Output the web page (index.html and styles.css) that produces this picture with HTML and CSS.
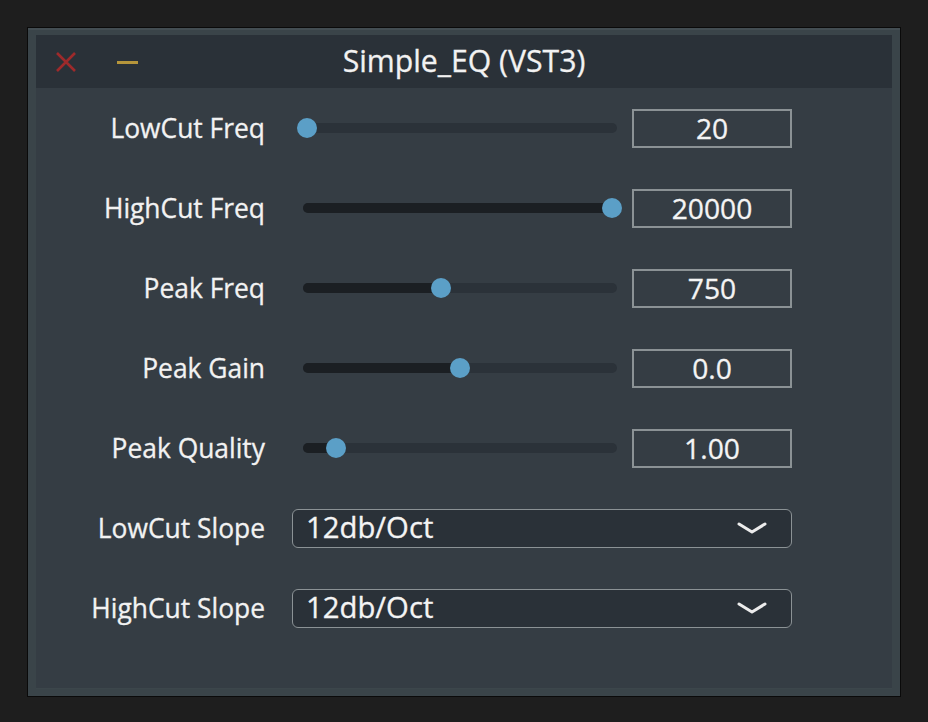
FILE: index.html
```html
<!DOCTYPE html>
<html lang="en">
<head>
<meta charset="utf-8">
<title>Simple_EQ (VST3)</title>
<link rel="stylesheet" href="styles.css">
</head>
<body>
<div class="window">
  <div class="titlebar">
    <div class="controls">
      <svg class="close" width="20" height="20" viewBox="0 0 20 20"><path d="M1 1 L19 19 M19 1 L1 19" stroke="#9e2a2b" stroke-width="2.6" fill="none"/></svg>
      <span class="minimize"></span>
    </div>
    <div class="title">Simple_EQ (VST3)</div>
  </div>
  <div class="content">
    <div class="row">
      <div class="label">LowCut Freq</div>
      <div class="control">
        <div class="slider" style="--p:0"><div class="track"><div class="fill"></div></div><div class="thumb"></div></div>
        <div class="value">20</div>
      </div>
    </div>
    <div class="row">
      <div class="label">HighCut Freq</div>
      <div class="control">
        <div class="slider" style="--p:1"><div class="track"><div class="fill"></div></div><div class="thumb"></div></div>
        <div class="value">20000</div>
      </div>
    </div>
    <div class="row">
      <div class="label">Peak Freq</div>
      <div class="control">
        <div class="slider" style="--p:0.439"><div class="track"><div class="fill"></div></div><div class="thumb"></div></div>
        <div class="value">750</div>
      </div>
    </div>
    <div class="row">
      <div class="label">Peak Gain</div>
      <div class="control">
        <div class="slider" style="--p:0.502"><div class="track"><div class="fill"></div></div><div class="thumb"></div></div>
        <div class="value">0.0</div>
      </div>
    </div>
    <div class="row">
      <div class="label">Peak Quality</div>
      <div class="control">
        <div class="slider" style="--p:0.094"><div class="track"><div class="fill"></div></div><div class="thumb"></div></div>
        <div class="value">1.00</div>
      </div>
    </div>
    <div class="row">
      <div class="label">LowCut Slope</div>
      <div class="control">
        <div class="dropdown"><span class="dd-text">12db/Oct</span>
          <svg class="chevron" width="30" height="12" viewBox="0 0 30 12"><path d="M2 2 L15 10 L28 2" stroke="#ececec" stroke-width="3" fill="none" stroke-linecap="round" stroke-linejoin="round"/></svg>
        </div>
      </div>
    </div>
    <div class="row">
      <div class="label">HighCut Slope</div>
      <div class="control">
        <div class="dropdown"><span class="dd-text">12db/Oct</span>
          <svg class="chevron" width="30" height="12" viewBox="0 0 30 12"><path d="M2 2 L15 10 L28 2" stroke="#ececec" stroke-width="3" fill="none" stroke-linecap="round" stroke-linejoin="round"/></svg>
        </div>
      </div>
    </div>
  </div>
</div>
</body>
</html>
```

FILE: styles.css
```css
html, body {
  margin: 0;
  padding: 0;
  background: #1e1e1e;
  font-family: "Open Sans", "DejaVu Sans", sans-serif;
  color: #f2f2f2;
}

.window {
  box-sizing: border-box;
  margin: 27px 0 0 27px;
  width: 874px;
  height: 670px;
  border: 1px solid #0a0a0a;
  background: #3a4449;
  padding: 7px 8px 7px 8px;
  box-shadow: inset 0 2px 0 #434d52;
  display: flex;
  flex-direction: column;
}

.titlebar {
  height: 53px;
  background: #2a3138;
  position: relative;
  display: flex;
  align-items: center;
  justify-content: center;
}

.controls {
  position: absolute;
  left: 20px;
  top: 17px;
  display: flex;
  align-items: center;
  gap: 41px;
}

.close {
  display: block;
}

.minimize {
  display: block;
  width: 21px;
  height: 3px;
  background: #b5953b;
}

.title {
  font-size: 30.2px;
  line-height: 1;
  color: #f2f2f2;
  margin-top: -1px;
  -webkit-text-stroke: 0.3px #f2f2f2;
}

.content {
  flex: 1;
  background: #353d44;
  box-shadow: inset 0 -1px 0 #3c464b;
  display: flex;
  flex-direction: column;
}

.row {
  height: 80px;
  display: grid;
  grid-template-columns: 229px 500px;
  column-gap: 27px;
  align-items: center;
}

.label {
  text-align: right;
  font-size: 26.4px;
  line-height: 1;
  color: #f2f2f2;
  -webkit-text-stroke: 0.3px #f2f2f2;
}

.control {
  display: flex;
  align-items: center;
  height: 39px;
}

.slider {
  position: relative;
  width: 314px;
  height: 20px;
  margin-left: 11px;
}

.track {
  position: absolute;
  left: 0;
  right: 0;
  top: 5px;
  height: 10px;
  border-radius: 5px;
  background: #2b3239;
  overflow: hidden;
}

.fill {
  height: 100%;
  width: calc(4px + var(--p) * 305px);
  background: #1b1f23;
}

.thumb {
  position: absolute;
  top: 0;
  left: calc(4px + var(--p) * 305px);
  width: 20px;
  height: 20px;
  margin-left: -10px;
  border-radius: 50%;
  background: #5b9fc7;
}

.value {
  box-sizing: border-box;
  margin-left: 15px;
  width: 160px;
  height: 39px;
  border: 2px solid #8b9295;
  display: flex;
  align-items: center;
  justify-content: center;
  font-size: 28.2px;
  line-height: 1;
  color: #f4f4f4;
  -webkit-text-stroke: 0.3px #f4f4f4;
}

.dropdown {
  box-sizing: border-box;
  width: 500px;
  height: 39px;
  border: 1.5px solid #8b9295;
  border-radius: 6px;
  background: #2a3138;
  display: flex;
  align-items: center;
  justify-content: space-between;
  padding: 0 24px 0 13px;
}

.dd-text {
  font-size: 29.3px;
  line-height: 1;
  color: #f4f4f4;
  -webkit-text-stroke: 0.3px #f4f4f4;
}

.chevron {
  display: block;
}
```
